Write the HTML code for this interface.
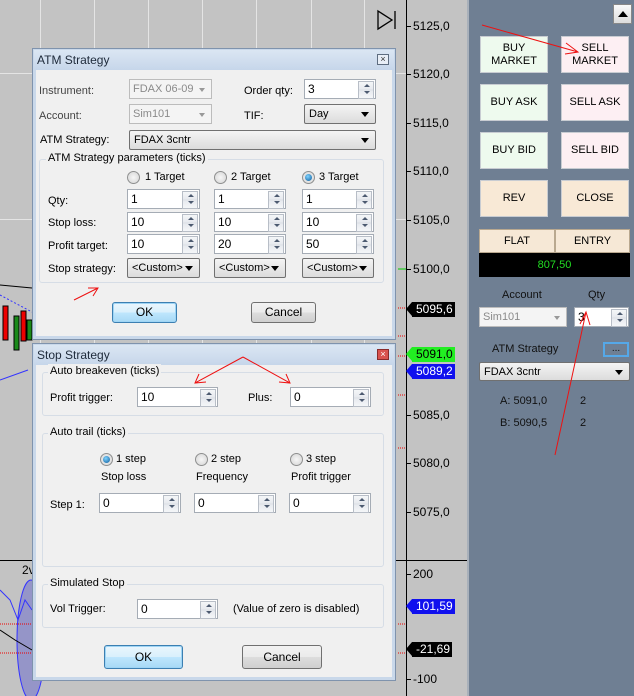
<!DOCTYPE html>
<html><head><meta charset="utf-8"><style>
*{box-sizing:border-box;margin:0;padding:0}
body{width:634px;height:696px;position:relative;overflow:hidden;background:#c3c3c3;font-family:"Liberation Sans",sans-serif;font-size:11px;color:#000}
.a{position:absolute}
.t{position:absolute;white-space:nowrap;line-height:14px}
.vl{position:absolute;width:1px;background:#e4e4e4;top:0;height:560px}
.ax{position:absolute;left:413px;font-size:12px;color:#000}
.tick{position:absolute;left:406px;width:5px;height:1px;background:#000}
.tag{position:absolute;left:412px;height:15px;padding:0 2px 0 4px;color:#fff;font-size:12px;line-height:15px}
.tag:before{content:"";position:absolute;left:-6px;top:0;border-right:6px solid;border-right-color:inherit;border-top:7.5px solid transparent;border-bottom:7.5px solid transparent}
.dlg{position:absolute;left:32px;width:364px;background:#f0f0f0;border:1px solid #7f93ad;box-shadow:inset 0 0 0 3px #c9d8ea}
.tb{position:absolute;left:1px;right:1px;top:1px;height:20px;background:linear-gradient(#dbe6f3,#c6d6ea)}
.tb span{position:absolute;left:3px;top:3px;font-size:12px;color:#1e2a3a}
.x{position:absolute;right:5px;top:4px;width:12px;height:11px;border:1px solid #5e6d80;background:#e8eef6;font-size:9px;line-height:9px;text-align:center;color:#333}
.cb{position:absolute;height:20px;border:1px solid #707070;border-radius:2px;background:linear-gradient(#f4f4f4,#dcdcdc);padding:2px 0 0 4px;line-height:14px}
.cb:after{content:"";position:absolute;right:6px;top:7px;border-left:4px solid transparent;border-right:4px solid transparent;border-top:5px solid #000}
.cbd{position:absolute;height:20px;border:1px solid #bcbcbc;background:#f4f4f4;color:#8a8a8a;padding:2px 0 0 3px;line-height:14px}
.cbd:after{content:"";position:absolute;right:6px;top:8px;border-left:3px solid transparent;border-right:3px solid transparent;border-top:4px solid #999}
.sp{position:absolute;height:20px;border:1px solid #a5acb5;background:#fff;padding:1px 0 0 3px;line-height:16px;font-size:12px}
.sp:after{content:"";position:absolute;right:1px;top:1px;width:14px;height:16px;border:1px solid #b8bec7;background:linear-gradient(#f4f6f8 0,#e6e9ee 48%,#b8bec7 50%,#e6e9ee 52%,#f4f6f8 100%)}
.sp i{position:absolute;right:5px;z-index:2;border-left:3px solid transparent;border-right:3px solid transparent}
.sp i.u{top:4px;border-bottom:3px solid #4c5a70}.sp i.d{top:11px;border-top:3px solid #4c5a70}
.gb{position:absolute;border:1px solid #d6dde6;border-radius:3px}
.gt{position:absolute;background:#f0f0f0;padding:0 2px;line-height:14px;white-space:nowrap}
.rd{position:absolute;width:13px;height:13px;border-radius:50%;border:1px solid #8e8f8f;background:radial-gradient(#f6f6f6,#d4d4d4)}
.rd.on:after{content:"";position:absolute;left:2px;top:2px;width:7px;height:7px;border-radius:50%;background:radial-gradient(circle at 40% 35%,#7fd3ff,#0c5a9a)}
.btn{position:absolute;height:21px;border:1px solid #707070;border-radius:3px;background:linear-gradient(#f2f2f2 0,#ebebeb 50%,#dddddd 51%,#cfcfcf 100%);text-align:center;line-height:19px;font-size:12px}
.btn.def{border-color:#3c7fb1;box-shadow:inset 0 0 0 1px #9fd5f5;background:linear-gradient(#eaf6fd 0,#d9f0fc 50%,#bee6fd 51%,#a7d9f5 100%)}
.pb{position:absolute;width:68px;height:37px;border:1px solid #c8ccd2;text-align:center;font-size:11px;color:#000;display:flex;align-items:center;justify-content:center;line-height:13px}
.g{background:#eefaee}.p{background:#fdeff3}.b{background:#f8e9d6}
</style></head><body>
<div class="vl" style="left:40px"></div><div class="vl" style="left:94px"></div><div class="vl" style="left:148px"></div><div class="vl" style="left:202px"></div><div class="vl" style="left:256px"></div><div class="vl" style="left:311px"></div><div class="vl" style="left:364px"></div>
<div class="a" style="left:0;top:73px;width:406px;height:1px;background:#e4e4e4"></div>
<div class="a" style="left:0;top:219px;width:406px;height:1px;background:#e4e4e4"></div>
<div class="a" style="left:0;top:560px;width:468px;height:1px;background:#000"></div>
<div class="a" style="left:406px;top:0;width:1px;height:696px;background:#000"></div>
<svg class="a" style="left:0;top:0" width="406" height="696">
<path d="M0 285 L32 288" stroke="#000" fill="none"/>
<path d="M0 295 L32 312" stroke="#3333ff" stroke-dasharray="2 2" fill="none"/>
<rect x="3" y="306" width="5" height="34" fill="#e00" stroke="#000"/><rect x="14" y="316" width="5" height="34" fill="#1a8a1a" stroke="#000"/><rect x="21" y="311" width="5" height="30" fill="#e00" stroke="#000"/><rect x="27" y="320" width="5" height="20" fill="#1a8a1a" stroke="#000"/>
<path d="M0 380 L28 370" stroke="#3333ff" fill="none"/>
<text x="22" y="574" font-family="Liberation Sans" font-size="12">2v</text>
<ellipse cx="31" cy="640" rx="14" ry="60" fill="#7777cc" fill-opacity=".6" stroke="#3333ff"/>
<path d="M0 590 L10 600 L18 620 L25 600 L32 610" stroke="#3333ff" fill="none"/>
<path d="M0 630 L15 640 L32 650" stroke="#000" fill="none"/>
<path d="M0 624 H32 M0 653 H32" stroke="#e00" stroke-dasharray="1 1"/>
<path d="M398 308 H406 M398 336 H406 M398 356 H406 M398 395 H406 M398 448 H406 M398 624 H406 M398 653 H406" stroke="#e00" stroke-dasharray="1 1"/>
<path d="M398 269 H406" stroke="#0c0"/>
<path d="M378 11 L392 20 L378 29 Z M395 11 V29" stroke="#000" stroke-width="1.3" fill="none"/>
</svg>
<div class="tick" style="top:26px"></div><div class="ax" style="top:19px">5125,0</div>
<div class="tick" style="top:74px"></div><div class="ax" style="top:67px">5120,0</div>
<div class="tick" style="top:123px"></div><div class="ax" style="top:116px">5115,0</div>
<div class="tick" style="top:171px"></div><div class="ax" style="top:164px">5110,0</div>
<div class="tick" style="top:220px"></div><div class="ax" style="top:213px">5105,0</div>
<div class="tick" style="top:269px"></div><div class="ax" style="top:262px">5100,0</div>
<div class="tag" style="top:302px;background:#000;border-color:#000">5095,6</div>
<div class="tag" style="top:347px;background:#22ee22;border-color:#22ee22;color:#000">5091,0</div>
<div class="tag" style="top:364px;background:#1010ee;border-color:#1010ee">5089,2</div>
<div class="tick" style="top:415px"></div><div class="ax" style="top:408px">5085,0</div>
<div class="tick" style="top:463px"></div><div class="ax" style="top:456px">5080,0</div>
<div class="tick" style="top:512px"></div><div class="ax" style="top:505px">5075,0</div>
<div class="tick" style="top:574px"></div><div class="ax" style="top:567px">200</div>
<div class="tag" style="top:599px;background:#1010ee;border-color:#1010ee">101,59</div>
<div class="tag" style="top:642px;background:#000;border-color:#000">-21,69</div>
<div class="tick" style="top:679px"></div><div class="ax" style="top:672px">-100</div>
<div class="a" style="left:467px;top:0;width:167px;height:696px;background:#6f7f93;border-left:2px solid #a8b0ba"></div>
<div class="a" style="left:613px;top:4px;width:19px;height:20px;background:linear-gradient(#fafafa,#dcdcdc);border:1px solid #888"><div class="a" style="left:4px;top:6px;border-left:5px solid transparent;border-right:5px solid transparent;border-bottom:6px solid #000"></div></div>
<div class="pb g" style="left:480px;top:36px">BUY<br>MARKET</div>
<div class="pb p" style="left:561px;top:36px">SELL<br>MARKET</div>
<div class="pb g" style="left:480px;top:84px">BUY ASK</div>
<div class="pb p" style="left:561px;top:84px">SELL ASK</div>
<div class="pb g" style="left:480px;top:132px">BUY BID</div>
<div class="pb p" style="left:561px;top:132px">SELL BID</div>
<div class="pb b" style="left:480px;top:180px">REV</div>
<div class="pb b" style="left:561px;top:180px">CLOSE</div>
<div class="a" style="left:479px;top:229px;width:76px;height:24px;background:#f6e8d6;border:1px solid #b9a88f;text-align:center;line-height:22px">FLAT</div>
<div class="a" style="left:555px;top:229px;width:75px;height:24px;background:#f6e8d6;border:1px solid #b9a88f;text-align:center;line-height:22px">ENTRY</div>
<div class="a" style="left:479px;top:253px;width:151px;height:24px;background:#000;color:#22dd22;text-align:center;line-height:24px">807,50</div>
<div class="t" style="left:502px;top:288px;color:#111">Account</div>
<div class="t" style="left:588px;top:288px;color:#111">Qty</div>
<div class="cbd" style="left:479px;top:307px;width:88px">Sim101</div>
<div class="sp" style="left:574px;top:307px;width:55px">3<i class="u"></i><i class="d"></i></div>
<div class="t" style="left:492px;top:342px;color:#111">ATM Strategy</div>
<div class="a" style="left:603px;top:342px;width:26px;height:15px;border:2px solid #55a8e8;background:#6f7f93;color:#111;font-size:10px;text-align:center;line-height:9px">...</div>
<div class="cb" style="left:479px;top:362px;width:151px;height:19px">FDAX 3cntr</div>
<div class="t" style="left:500px;top:394px;color:#111">A: 5091,0</div><div class="t" style="left:580px;top:394px;color:#111">2</div>
<div class="t" style="left:500px;top:416px;color:#111">B: 5090,5</div><div class="t" style="left:580px;top:416px;color:#111">2</div>

<div class="dlg" style="top:48px;height:292px">
<div class="tb"><span>ATM Strategy</span><div class="x">×</div></div>
</div>
<div class="t" style="left:39px;top:84px;color:#444">Instrument:</div>
<div class="cbd" style="left:129px;top:79px;width:83px">FDAX 06-09</div>
<div class="t" style="left:244px;top:84px">Order qty:</div>
<div class="sp" style="left:304px;top:79px;width:72px">3<i class="u"></i><i class="d"></i></div>
<div class="t" style="left:39px;top:109px;color:#444">Account:</div>
<div class="cbd" style="left:129px;top:104px;width:83px">Sim101</div>
<div class="t" style="left:244px;top:109px">TIF:</div>
<div class="cb" style="left:304px;top:104px;width:72px">Day</div>
<div class="t" style="left:40px;top:133px">ATM Strategy:</div>
<div class="cb" style="left:129px;top:130px;width:247px">FDAX 3cntr</div>
<div class="gb" style="left:39px;top:159px;width:345px;height:124px"></div>
<div class="gt" style="left:46px;top:151px">ATM Strategy parameters (ticks)</div>
<div class="rd" style="left:127px;top:171px"></div><div class="t" style="left:145px;top:170px">1 Target</div>
<div class="rd" style="left:214px;top:171px"></div><div class="t" style="left:231px;top:170px">2 Target</div>
<div class="rd on" style="left:302px;top:171px"></div><div class="t" style="left:319px;top:170px">3 Target</div>
<div class="t" style="left:48px;top:194px">Qty:</div>
<div class="sp" style="left:127px;top:189px;width:73px">1<i class="u"></i><i class="d"></i></div>
<div class="sp" style="left:214px;top:189px;width:72px">1<i class="u"></i><i class="d"></i></div>
<div class="sp" style="left:302px;top:189px;width:72px">1<i class="u"></i><i class="d"></i></div>
<div class="t" style="left:48px;top:216px">Stop loss:</div>
<div class="sp" style="left:127px;top:212px;width:73px">10<i class="u"></i><i class="d"></i></div>
<div class="sp" style="left:214px;top:212px;width:72px">10<i class="u"></i><i class="d"></i></div>
<div class="sp" style="left:302px;top:212px;width:72px">10<i class="u"></i><i class="d"></i></div>
<div class="t" style="left:48px;top:239px">Profit target:</div>
<div class="sp" style="left:127px;top:234px;width:73px">10<i class="u"></i><i class="d"></i></div>
<div class="sp" style="left:214px;top:234px;width:72px">20<i class="u"></i><i class="d"></i></div>
<div class="sp" style="left:302px;top:234px;width:72px">50<i class="u"></i><i class="d"></i></div>
<div class="t" style="left:48px;top:262px">Stop strategy:</div>
<div class="cb" style="left:127px;top:258px;width:73px">&lt;Custom&gt;</div>
<div class="cb" style="left:214px;top:258px;width:72px">&lt;Custom&gt;</div>
<div class="cb" style="left:302px;top:258px;width:72px">&lt;Custom&gt;</div>
<div class="btn def" style="left:112px;top:302px;width:65px">OK</div>
<div class="btn" style="left:251px;top:302px;width:65px">Cancel</div>

<div class="dlg" style="top:343px;height:338px">
<div class="tb"><span>Stop Strategy</span><div class="x" style="background:#d9534f;border-color:#8a2a2a;color:#fff">×</div></div>
</div>
<div class="gb" style="left:42px;top:372px;width:342px;height:44px"></div>
<div class="gt" style="left:48px;top:364px">Auto breakeven (ticks)</div>
<div class="t" style="left:50px;top:391px">Profit trigger:</div>
<div class="sp" style="left:137px;top:387px;width:81px">10<i class="u"></i><i class="d"></i></div>
<div class="t" style="left:248px;top:391px">Plus:</div>
<div class="sp" style="left:290px;top:387px;width:81px">0<i class="u"></i><i class="d"></i></div>
<div class="gb" style="left:42px;top:433px;width:342px;height:134px"></div>
<div class="gt" style="left:48px;top:425px">Auto trail (ticks)</div>
<div class="rd on" style="left:100px;top:453px"></div><div class="t" style="left:116px;top:452px">1 step</div>
<div class="rd" style="left:195px;top:453px"></div><div class="t" style="left:211px;top:452px">2 step</div>
<div class="rd" style="left:290px;top:453px"></div><div class="t" style="left:306px;top:452px">3 step</div>
<div class="t" style="left:101px;top:470px">Stop loss</div>
<div class="t" style="left:196px;top:470px">Frequency</div>
<div class="t" style="left:291px;top:470px">Profit trigger</div>
<div class="t" style="left:50px;top:498px">Step 1:</div>
<div class="sp" style="left:99px;top:493px;width:82px">0<i class="u"></i><i class="d"></i></div>
<div class="sp" style="left:194px;top:493px;width:82px">0<i class="u"></i><i class="d"></i></div>
<div class="sp" style="left:289px;top:493px;width:82px">0<i class="u"></i><i class="d"></i></div>
<div class="gb" style="left:42px;top:584px;width:342px;height:44px"></div>
<div class="gt" style="left:48px;top:576px">Simulated Stop</div>
<div class="t" style="left:50px;top:602px">Vol Trigger:</div>
<div class="sp" style="left:137px;top:599px;width:81px">0<i class="u"></i><i class="d"></i></div>
<div class="t" style="left:233px;top:602px">(Value of zero is disabled)</div>
<div class="btn def" style="left:104px;top:645px;width:79px;height:24px;line-height:22px">OK</div>
<div class="btn" style="left:242px;top:645px;width:80px;height:24px;line-height:22px">Cancel</div>

<svg class="a" style="left:0;top:0" width="634" height="696" fill="none" stroke="#ee1111" stroke-width="1">
<path d="M482 25 L578 52 M566 43 L578 52 L565 54"/>
<path d="M74 300 L98 288 M88 288 L98 288 L93 296"/>
<path d="M243 357 L195 383 M199 374 L195 383 L206 382"/>
<path d="M243 357 L290 383 M286 374 L290 383 L279 382"/>
<path d="M555 455 L586 312 M580 324 L586 312 L590 325"/>
</svg>
</body></html>
